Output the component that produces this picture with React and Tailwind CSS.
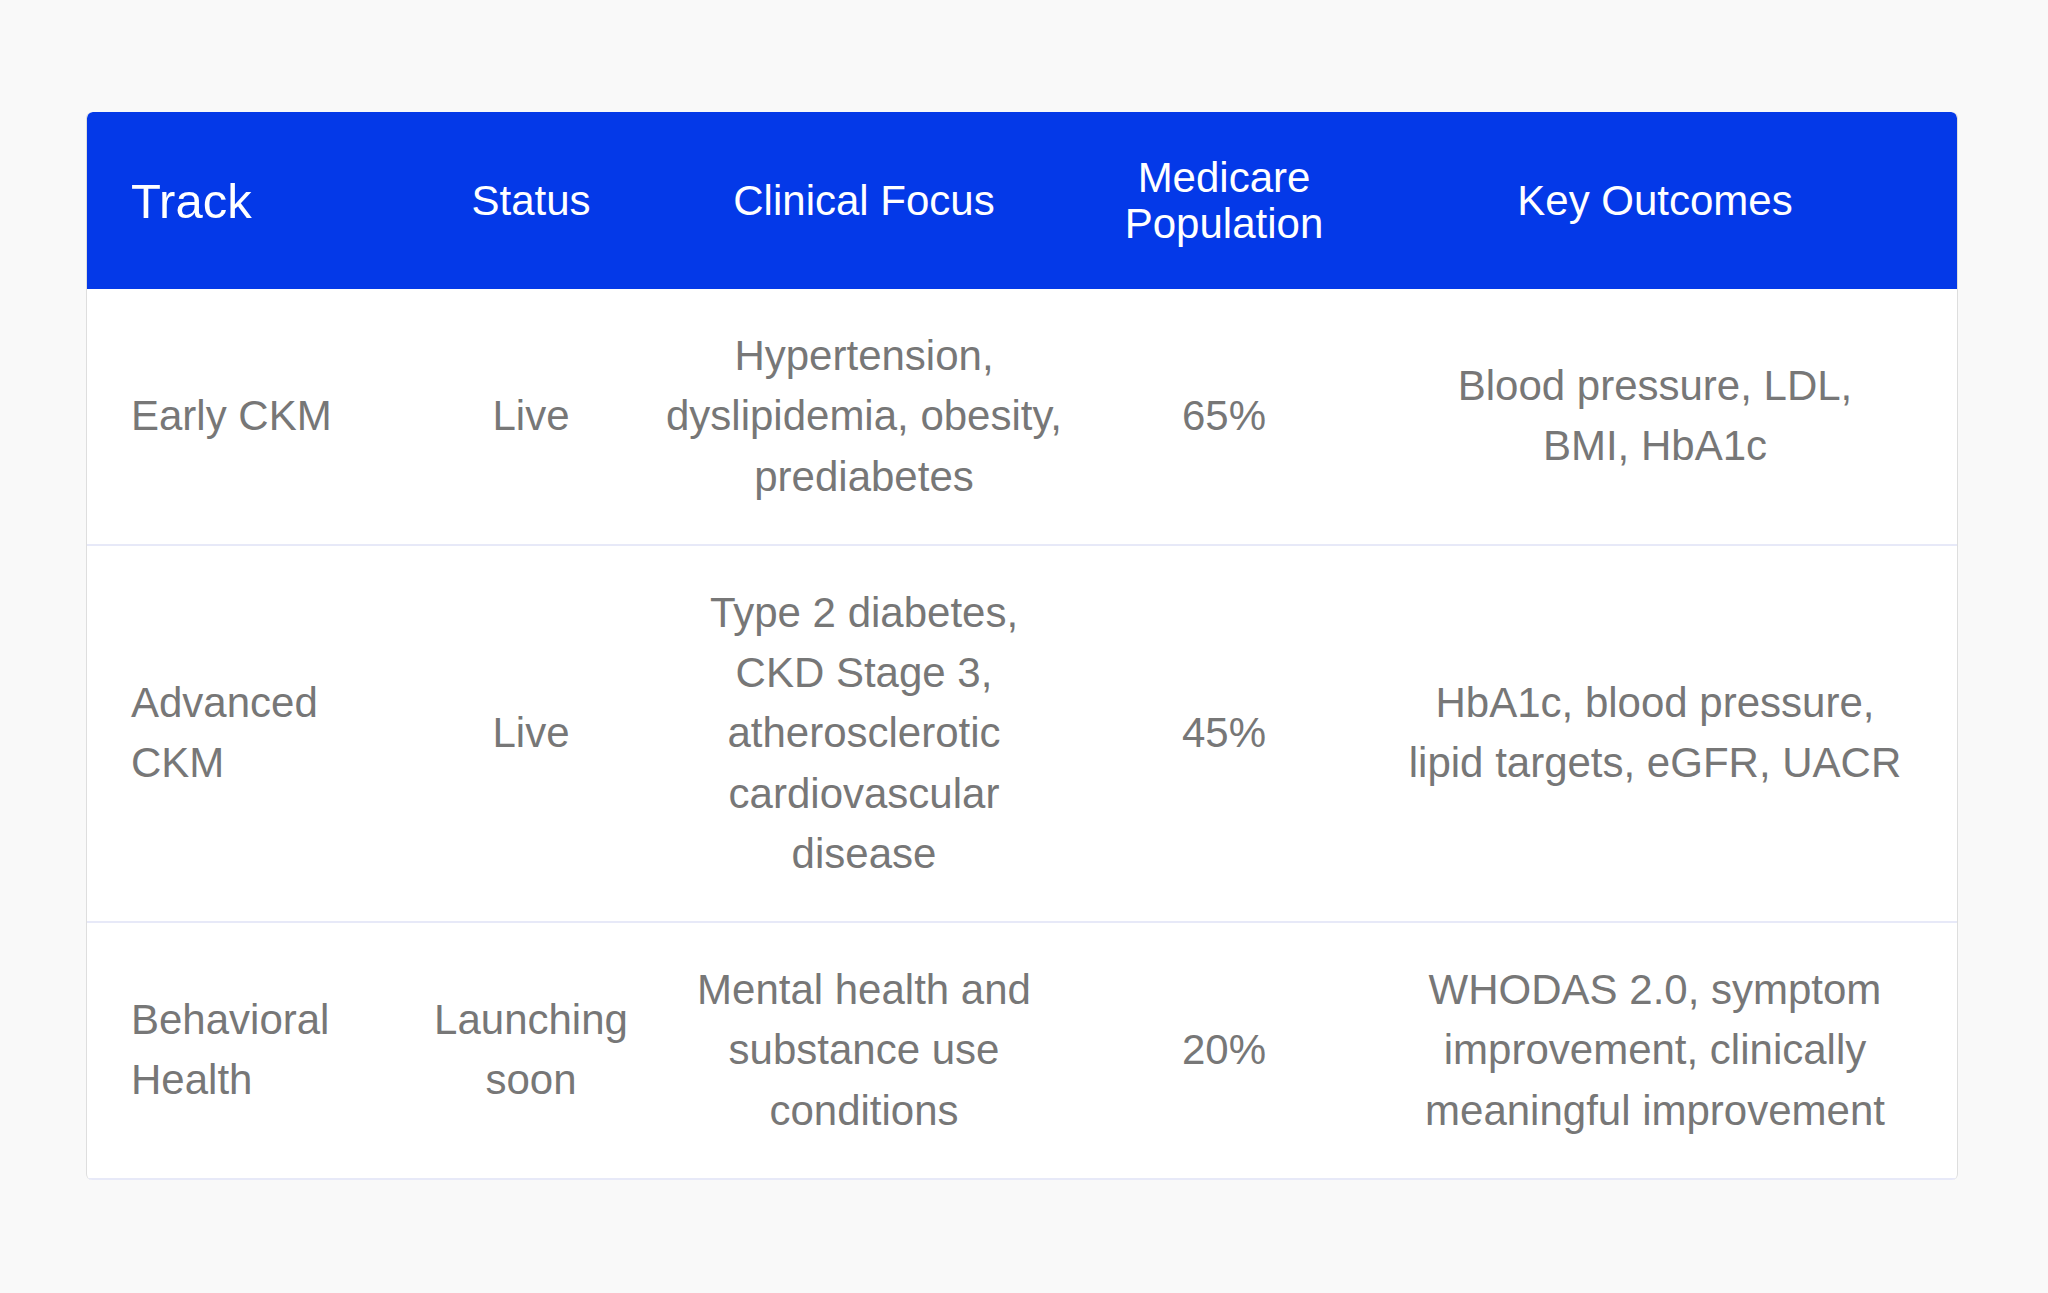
const COLUMNS = "grid grid-cols-[344px_200px_466px_254px_608px]";

const ROWS = [
  {
    track: ["Early CKM"],
    status: ["Live"],
    focus: ["Hypertension,", "dyslipidemia, obesity,", "prediabetes"],
    population: "65%",
    outcomes: ["Blood pressure, LDL,", "BMI, HbA1c"],
  },
  {
    track: ["Advanced", "CKM"],
    status: ["Live"],
    focus: [
      "Type 2 diabetes,",
      "CKD Stage 3,",
      "atherosclerotic",
      "cardiovascular",
      "disease",
    ],
    population: "45%",
    outcomes: ["HbA1c, blood pressure,", "lipid targets, eGFR, UACR"],
  },
  {
    track: ["Behavioral", "Health"],
    status: ["Launching", "soon"],
    focus: ["Mental health and", "substance use", "conditions"],
    population: "20%",
    outcomes: [
      "WHODAS 2.0, symptom",
      "improvement, clinically",
      "meaningful improvement",
    ],
  },
];

function Lines({ lines }) {
  return lines.map((l, i) => (
    <span key={i} className="block whitespace-nowrap">
      {l}
    </span>
  ));
}

export default function App() {
  const cell = "flex items-center justify-center text-center";

  return (
    <div className="min-h-screen bg-[#f9f9f9] pt-[112px] pr-[90px] pl-[86px] font-['Liberation_Sans',Arial,sans-serif]">
      <div className="overflow-hidden rounded-[6px] border-x border-[#dedede] bg-white">
        {/* Header */}
        <div
          className={`${COLUMNS} h-[177px] rounded-t-[6px] bg-[#0439e8] text-[42px] leading-[46px] text-white`}
        >
          <div className="flex items-center pl-[44px] text-[49px]">Track</div>
          <div className={cell}>Status</div>
          <div className={cell}>Clinical Focus</div>
          <div className={cell}>
            Medicare
            <br />
            Population
          </div>
          <div className={cell}>Key Outcomes</div>
        </div>

        {/* Body */}
        {ROWS.map((r, i) => (
          <div
            key={i}
            className={`${COLUMNS} border-b-2 border-[#e7e9f8] py-[37px] text-[42px] leading-[60.25px] text-[#777777]`}
          >
            <div className="flex flex-col justify-center pl-[44px]">
              <Lines lines={r.track} />
            </div>
            <div className={`${cell} flex-col`}>
              <Lines lines={r.status} />
            </div>
            <div className={`${cell} flex-col`}>
              <Lines lines={r.focus} />
            </div>
            <div className={cell}>{r.population}</div>
            <div className={`${cell} flex-col`}>
              <Lines lines={r.outcomes} />
            </div>
          </div>
        ))}
      </div>
    </div>
  );
}
